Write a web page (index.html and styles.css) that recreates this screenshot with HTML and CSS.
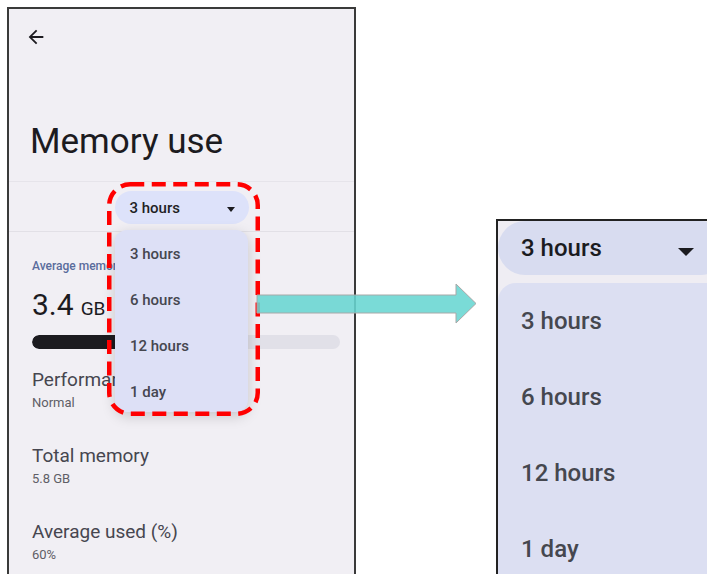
FILE: index.html
```html
<!DOCTYPE html>
<html lang="en">
<head>
  <meta charset="UTF-8">
  <title>Memory use</title>
  <link rel="stylesheet" href="styles.css">
</head>
<body>
  <div class="stage">
    <div class="phone">
      <div class="appbar">
        <svg class="back" viewBox="0 0 24 24" width="22" height="22"><path d="M20 11H7.83l5.59-5.59L12 4l-8 8 8 8 1.41-1.41L7.83 13H20v-2z"/></svg>
      </div>
      <h1 class="title">Memory use</h1>

      <div class="filter">
        <div class="spinner">
          <span>3 hours</span>
          <i class="caret"></i>
        </div>
      </div>

      <div class="content">
        <p class="label">Average memory use</p>
        <p class="value"><b>3.4</b><small>GB</small></p>
        <div class="bar"><div class="bar-fill" style="width:58.6%"></div></div>

        <div class="items">
          <div class="item">
            <p class="item-title">Performance</p>
            <p class="item-sub">Normal</p>
          </div>
          <div class="item">
            <p class="item-title">Total memory</p>
            <p class="item-sub">5.8 GB</p>
          </div>
          <div class="item">
            <p class="item-title">Average used (%)</p>
            <p class="item-sub">60%</p>
          </div>
        </div>
      </div>

      <ul class="menu">
        <li>3 hours</li>
        <li>6 hours</li>
        <li>12 hours</li>
        <li>1 day</li>
      </ul>
      <svg class="highlight" width="153" height="234" viewBox="0 0 153 234">
        <rect x="2.25" y="2.25" width="148.5" height="229.5" rx="21" ry="21" />
      </svg>
    </div>

    <div class="zoom">
      <div class="zoom-spinner">
        <span>3 hours</span>
        <i class="caret big"></i>
      </div>
      <ul class="zoom-menu">
        <li>3 hours</li>
        <li>6 hours</li>
        <li>12 hours</li>
        <li>1 day</li>
      </ul>
    </div>

    <svg class="arrow" width="222" height="42" viewBox="0 0 222 42">
      <polygon points="1,12 200,12 200,1 220,20.5 200,40 200,30 1,30" />
    </svg>
  </div>
</body>
</html>
```

FILE: styles.css
```css
html, body {
  margin: 0;
  padding: 0;
  overflow: hidden;
}
body {
  background: #fff;
  font-family: "Roboto", "Liberation Sans", sans-serif;
  color: #1c1b1f;
}
p, h1, ul {margin: 0; padding: 0;}
ul {list-style: none;}

.stage {
  position: relative;
  display: flex;
  align-items: flex-start;
  width: 707px;
  height: 574px;
  padding: 7px 0 0 7px;
  box-sizing: border-box;
  overflow: hidden;
}

/* phone screen */
.phone {
  position: relative;
  flex: none;
  width: 349px;
  height: 580px;
  box-sizing: border-box;
  border: 2px solid #3a3a3a;
  border-bottom: none;
  background: #f1eff4;
}
.appbar {
  height: 48px;
  padding: 17px 0 0 16px;
  box-sizing: border-box;
}
.back {
  display: block;
  fill: #1d1b20;
}
.title {
  margin-top: 65px;
  padding: 0 0 19px 21px;
  font-size: 35px;
  line-height: 40px;
  font-weight: 400;
  border-bottom: 1px solid #e6e4ea;
}
.filter {
  display: flex;
  justify-content: center;
  height: 50px;
  padding-top: 9px;
  box-sizing: border-box;
  border-bottom: 1px solid #e2e0e6;
}
.spinner {
  display: flex;
  align-items: center;
  width: 134px;
  height: 33px;
  padding: 0 14px 0 15px;
  box-sizing: border-box;
  border-radius: 17px;
  background: #dde2fa;
  font-size: 15px;
  font-weight: 500;
  color: #1f1f24;
}
.caret {
  margin: 3px 0 0 auto;
  width: 0;
  height: 0;
  border-left: 4px solid transparent;
  border-right: 4px solid transparent;
  border-top: 5px solid #1b1b1f;
}
.caret.big {
  margin-top: 8px;
  border-left-width: 8px;
  border-right-width: 8px;
  border-top-width: 8px;
}

.content {
  padding: 26px 0 0 23px;
}
.label {
  font-size: 12px;
  line-height: 16px;
  font-weight: 500;
  color: #5a6c9c;
  white-space: nowrap;
}
.value {
  margin-top: 14px;
  line-height: 34px;
}
.value b {
  font-size: 30px;
  font-weight: 400;
}
.value small {
  margin-left: 7px;
  font-size: 19px;
}
.bar {
  width: 308px;
  height: 14px;
  margin-top: 8px;
  border-radius: 7px;
  background: #e1e0e8;
  overflow: hidden;
}
.bar-fill {
  height: 100%;
  border-radius: 7px;
  background: #1c1b1f;
}
.items {
  margin-top: 2px;
}
.item {
  padding: 17px 0 15px;
}
.item-title {
  font-size: 19px;
  line-height: 24px;
  color: #46464f;
}
.item-sub {
  margin-top: 2px;
  font-size: 13px;
  line-height: 18px;
  color: #5f5e66;
}

/* dropdown popup */
.menu {
  position: absolute;
  left: 106px;
  top: 221px;
  width: 133px;
  height: 182px;
  padding-top: 1px;
  box-sizing: border-box;
  border-radius: 12px;
  background: #dde0f6;
  box-shadow: 0 4px 14px rgba(0,0,0,0.18);
  overflow: hidden;
}
.menu li {
  height: 46px;
  line-height: 46px;
  padding-left: 15px;
  font-size: 15px;
  font-weight: 500;
  color: #45464f;
}
.highlight {
  position: absolute;
  left: 98px;
  top: 173px;
}
.highlight rect {
  fill: none;
  stroke: #ff0000;
  stroke-width: 4.5;
  stroke-dasharray: 14 7.5;
}

/* zoomed view */
.zoom {
  flex: none;
  width: 230px;
  height: 360px;
  margin: 212px 0 0 140px;
  border-top: 2px solid #222;
  border-left: 2px solid #222;
  background: #efedf3;
}
.zoom-spinner {
  display: flex;
  align-items: center;
  width: 230px;
  height: 54px;
  padding: 0 34px 0 23px;
  box-sizing: border-box;
  border-radius: 27px;
  background: #d8dcf0;
  font-size: 24px;
  font-weight: 500;
  color: #1b1b1f;
}
.zoom-menu {
  margin-top: 8px;
  border-top-left-radius: 18px;
  background: #dcdff2;
  height: 320px;
}
.zoom-menu li {
  height: 76px;
  line-height: 76px;
  padding-left: 23px;
  font-size: 24px;
  font-weight: 500;
  color: #45474f;
}

.arrow {
  position: absolute;
  left: 256px;
  top: 283px;
}
.arrow polygon {
  fill: rgba(104, 214, 210, 0.88);
  stroke: #a8a8a8;
  stroke-width: 1;
}
```
